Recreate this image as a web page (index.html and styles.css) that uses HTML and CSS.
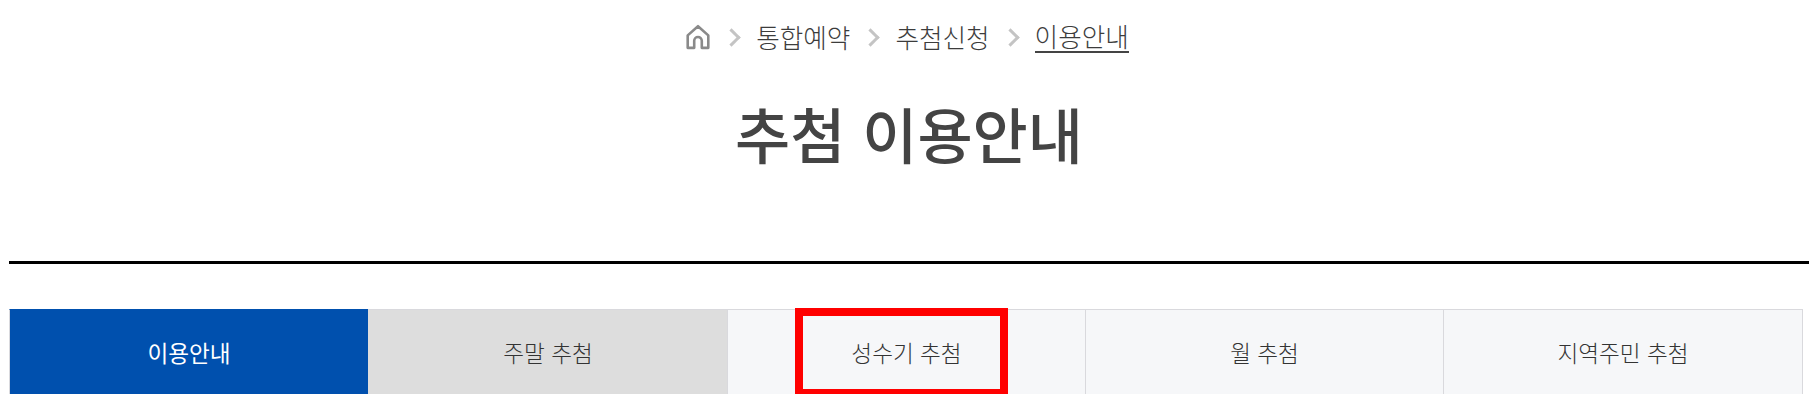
FILE: index.html
```html
<!DOCTYPE html>
<html lang="ko">
<head>
  <meta charset="UTF-8">
  <meta name="viewport" content="width=device-width, initial-scale=1.0">
  <title>추첨 이용안내</title>
  <link rel="stylesheet" href="styles.css">
</head>
<body>
  <!-- Breadcrumb -->
  <nav class="breadcrumb">
    <svg class="home-icon" viewBox="0 0 24 24" width="26" height="26" aria-hidden="true">
      <path d="M2.500 10.500 12 2l9.500 8.500V22h-6v-6.500a3.500 3.500 0 0 0-7 0V22h-6z"/>
    </svg>
    <span class="crumb-sep"></span>
    <a class="crumb">통합예약</a>
    <span class="crumb-sep"></span>
    <a class="crumb">추첨신청</a>
    <span class="crumb-sep"></span>
    <a class="crumb current">이용안내</a>
  </nav>

  <h1 class="page-title">추첨 이용안내</h1>

  <div class="title-line"></div>

  <!-- Tabs -->
  <ul class="tabs">
    <li class="tab active">이용안내</li>
    <li class="tab selected">주말 추첨</li>
    <li class="tab">성수기 추첨</li>
    <li class="tab">월 추첨</li>
    <li class="tab">지역주민 추첨</li>
    <li class="highlight-box"></li>
  </ul>
</body>
</html>
```

FILE: styles.css
```css
body {
  margin: 0;
  padding: 0 6px 0 9px;
  background-color: #fff;
  font-family: "Noto Sans CJK KR", "Noto Sans", sans-serif;
  color: #444;
}

/* Breadcrumb */
.breadcrumb {
  display: flex;
  justify-content: center;
  align-items: center;
  height: 36px;
  padding: 19px 4px 0 0;
  font-size: 25.6px;
  font-weight: 300;
}

.home-icon {
  fill: none;
  stroke: #8a8a8a;
  stroke-width: 2.4;
  stroke-linejoin: round;
}

.crumb-sep {
  width: 10px;
  height: 10px;
  margin: 0 18px 0 14px;
  border-top: 3px solid #c4c4c4;
  border-right: 3px solid #c4c4c4;
  transform: rotate(45deg);
}

.crumb {
  color: #3c3c3c;
  line-height: 30px;
}

.current {
  border-bottom: 2px solid #444;
}

.page-title {
  margin: 37px 0 0;
  height: 82px;
  font-size: 60px;
  font-weight: 500;
  line-height: 82px;
  text-align: center;
  color: #444;
}

.title-line {
  width: 1800px;
  height: 3px;
  margin-top: 87px;
  background-color: #000;
}

/* Tabs */
.tabs {
  position: relative;
  display: grid;
  grid-template-columns: 359px 359px 358px 358px 360px;
  width: 1794px;
  margin: 45px 0 0;
  padding: 0;
  list-style: none;
}

.tab {
  display: flex;
  justify-content: center;
  align-items: center;
  height: 84px;
  border-top: 1px solid #d9d9dd;
  border-left: 1px solid #d9d9dd;
  background-color: #f6f7f9;
  font-size: 22.6px;
  font-weight: 300;
  color: #333;
}

.tab:nth-child(5) {
  border-right: 1px solid #d9d9dd;
}

.active {
  border-top-color: #0050ae;
  background-color: #0050ae;
  font-weight: 400;
  color: #fff;
}

.selected {
  border-left-color: #ddd;
  background-color: #ddd;
}

/* Red annotation over the third tab */
.highlight-box {
  position: absolute;
  top: -1px;
  left: 786px;
  width: 197px;
  height: 73px;
  border: 8px solid #f00;
}
```
